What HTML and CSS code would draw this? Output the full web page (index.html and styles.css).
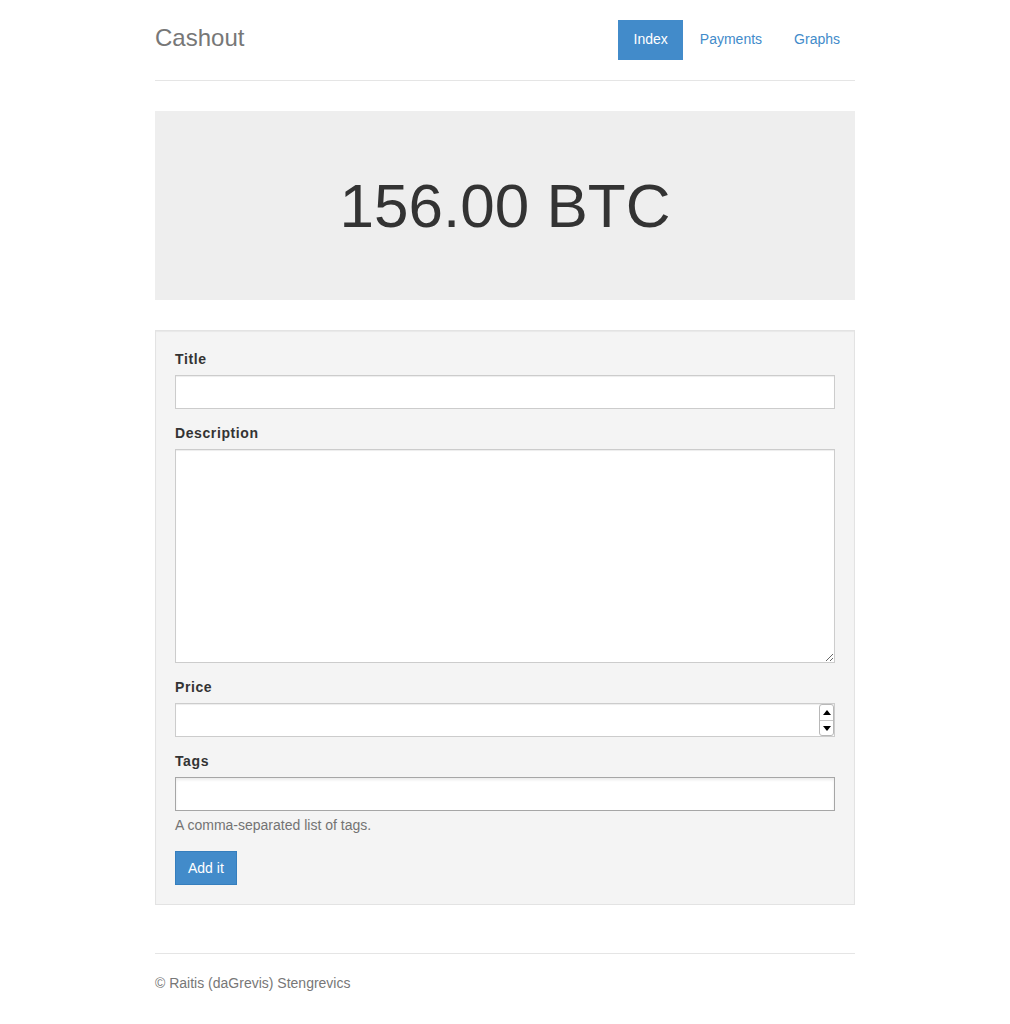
FILE: index.html
```html
<!DOCTYPE html>
<html lang="en">
<head>
<meta charset="utf-8">
<title>Cashout</title>
<link rel="stylesheet" href="styles.css">
</head>
<body>
<div class="container">
  <header class="header">
    <h3 class="brand">Cashout</h3>
    <ul class="nav">
      <li><a class="active" href="#">Index</a></li>
      <li><a href="#">Payments</a></li>
      <li><a href="#">Graphs</a></li>
    </ul>
  </header>

  <div class="jumbotron">
    <h1>156.00 BTC</h1>
  </div>

  <form class="well">
    <div class="form-group">
      <label class="label">Title</label>
      <input class="form-control" type="text">
    </div>
    <div class="form-group">
      <label class="label">Description</label>
      <textarea class="form-control textarea"></textarea>
    </div>
    <div class="form-group">
      <label class="label">Price</label>
      <div class="number-wrap">
        <input class="form-control" type="text">
        <span class="spinner"><span class="spin up"></span><span class="spin down"></span></span>
      </div>
    </div>
    <div class="form-group tight">
      <label class="label">Tags</label>
      <input class="plain-input" type="text">
      <p class="help-block">A comma-separated list of tags.</p>
    </div>
    <button class="btn" type="button">Add it</button>
  </form>

  <footer class="footer">
    <p>© Raitis (daGrevis) Stengrevics</p>
  </footer>
</div>
</body>
</html>
```

FILE: styles.css
```css
* { box-sizing: border-box; }
html, body { margin: 0; padding: 0; background: #fff; }
body {
  font-family: "Liberation Sans", Arial, Helvetica, sans-serif;
  font-size: 14px;
  line-height: 20px;
  color: #333;
  padding-top: 20px;
}
.container { width: 700px; margin: 0 auto; }

.header {
  display: flex;
  justify-content: space-between;
  align-items: flex-start;
  padding-bottom: 20px;
  border-bottom: 1px solid #e5e5e5;
  margin-bottom: 30px;
}
.brand {
  margin: 0;
  font-size: 24px;
  font-weight: 400;
  line-height: 35px;
  color: #777;
}
.nav { list-style: none; margin: 0; padding: 0; display: flex; gap: 2px; }
.nav a {
  display: block;
  padding: 9px 15px 11px;
  color: #428bca;
  text-decoration: none;
  line-height: 20px;
}
.nav a.active { background: #428bca; color: #fff; padding-left: 16px; }

.jumbotron {
  background: #eee;
  padding: 60px 0;
  text-align: center;
  margin-bottom: 30px;
}
.jumbotron h1 {
  margin: 0;
  font-size: 62px;
  font-weight: 400;
  line-height: 69px;
  color: #333;
}

.well {
  background: #f4f4f4;
  border: 1px solid #e3e3e3;
  padding: 19px;
  box-shadow: inset 0 1px 1px rgba(0,0,0,.05);
  margin: 0 0 48px;
}
.form-group { margin-bottom: 15px; }
.form-group.tight { margin-bottom: 0; }
.label {
  display: block;
  font-weight: 700;
  letter-spacing: 0.6px;
  margin-bottom: 5px;
  line-height: 18px;
  padding-bottom: 2px;
}
.form-control {
  display: block;
  width: 100%;
  height: 34px;
  padding: 6px 12px;
  font: inherit;
  color: #555;
  background: #fff;
  border: 1px solid #ccc;
  border-radius: 0;
  box-shadow: inset 0 1px 1px rgba(0,0,0,.075);
}
.textarea { height: 214px; resize: vertical; }
.number-wrap { position: relative; }
.spinner {
  position: absolute;
  right: 1px;
  top: 1px;
  width: 15px;
  height: 32px;
  border: 1px solid #b8b8b8;
  border-radius: 3px;
  background: #fff;
  display: flex;
  flex-direction: column;
}
.spin { flex: 1; position: relative; }
.spin.up { border-bottom: 1px solid #c8c8c8; }
.spin::after {
  content: "";
  position: absolute;
  left: 3px;
  top: 5px;
  border-left: 4px solid transparent;
  border-right: 4px solid transparent;
}
.spin.up::after { border-bottom: 5px solid #000; }
.spin.down::after { border-top: 5px solid #000; top: 5px; }

.plain-input {
  display: block;
  width: 100%;
  height: 34px;
  padding: 6px 12px;
  font: inherit;
  background: #fff;
  border: 1px solid #a6a6a6;
  border-radius: 0;
  box-shadow: inset 0 2px 3px rgba(0,0,0,.08);
}
.help-block { margin: 4px 0 16px; color: #737373; }
.btn {
  display: inline-block;
  height: 34px;
  padding: 6px 12px;
  font: inherit;
  line-height: 20px;
  color: #fff;
  background: #428bca;
  border: 1px solid #357ebd;
  border-radius: 0;
}

.footer {
  border-top: 1px solid #e5e5e5;
  padding-top: 19px;
  color: #777;
}
.footer p { margin: 0 0 20px; }
```
